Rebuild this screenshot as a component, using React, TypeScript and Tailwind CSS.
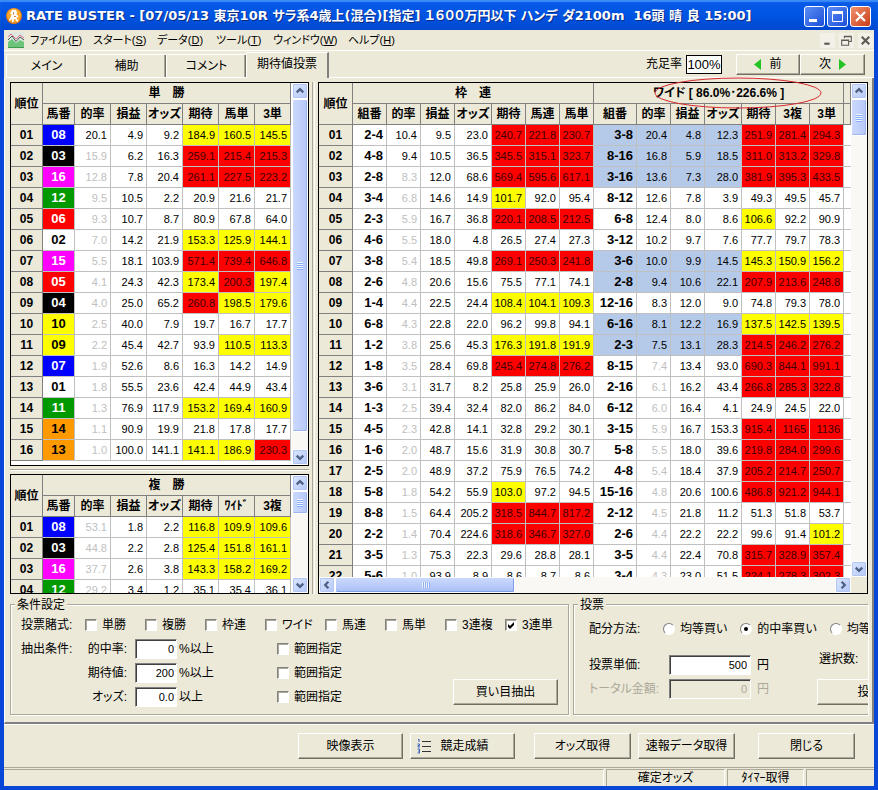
import { ReactNode, useState } from "react";
import clsx from "clsx";

interface Group {
  title: string;
  columns: string[];
  widths: number[];
  // rates below this value are printed in grey
  minRate: number;
  highlight?: boolean;
  rows: string[];
}

const WIN: Group = {
  title: "単　勝",
  columns: ["馬番", "的率", "損益", "オッズ", "期待", "馬単", "3単"],
  widths: [32, 36, 36, 36, 36, 36, 36],
  minRate: 20,
  rows: [
    "08 20.1 4.9 9.2 184.9 160.5 145.5",
    "03 15.9 6.2 16.3 259.1 215.4 215.3",
    "16 12.8 7.8 20.4 261.1 227.5 223.2",
    "12 9.5 10.5 2.2 20.9 21.6 21.7",
    "06 9.3 10.7 8.7 80.9 67.8 64.0",
    "02 7.0 14.2 21.9 153.3 125.9 144.1",
    "15 5.5 18.1 103.9 571.4 739.4 646.8",
    "05 4.1 24.3 42.3 173.4 200.3 197.4",
    "04 4.0 25.0 65.2 260.8 198.5 179.6",
    "10 2.5 40.0 7.9 19.7 16.7 17.7",
    "09 2.2 45.4 42.7 93.9 110.5 113.3",
    "07 1.9 52.6 8.6 16.3 14.2 14.9",
    "01 1.8 55.5 23.6 42.4 44.9 43.4",
    "11 1.3 76.9 117.9 153.2 169.4 160.9",
    "14 1.1 90.9 19.9 21.8 17.8 17.7",
    "13 1.0 100.0 141.1 141.1 186.9 230.3",
  ],
};

const PLACE: Group = {
  title: "複　勝",
  columns: ["馬番", "的率", "損益", "オッズ", "期待", "ﾜｲﾄﾞ", "3複"],
  widths: [32, 36, 36, 36, 36, 36, 36],
  minRate: 60,
  rows: [
    "08 53.1 1.8 2.2 116.8 109.9 109.6",
    "03 44.8 2.2 2.8 125.4 151.8 161.1",
    "16 37.7 2.6 3.8 143.3 158.2 169.2",
    "12 29.2 3.4 1.2 35.1 35.4 36.1",
  ],
};

const BRACKET: Group = {
  title: "枠　連",
  columns: ["組番", "的率", "損益", "オッズ", "期待", "馬連", "馬単"],
  widths: [34, 34, 34, 37, 34, 34, 34],
  minRate: 9,
  rows: [
    "2-4 10.4 9.5 23.0 240.7 221.8 230.7",
    "4-8 9.4 10.5 36.5 345.5 315.1 323.7",
    "2-8 8.3 12.0 68.6 569.4 595.6 617.1",
    "3-4 6.8 14.6 14.9 101.7 92.0 95.4",
    "2-3 5.9 16.7 36.8 220.1 208.5 212.5",
    "4-6 5.5 18.0 4.8 26.5 27.4 27.3",
    "3-8 5.4 18.5 49.8 269.1 250.3 241.8",
    "2-6 4.8 20.6 15.6 75.5 77.1 74.1",
    "1-4 4.4 22.5 24.4 108.4 104.1 109.3",
    "6-8 4.3 22.8 22.0 96.2 99.8 94.1",
    "1-2 3.8 25.6 45.3 176.3 191.8 191.9",
    "1-8 3.5 28.4 69.8 245.4 274.8 276.2",
    "3-6 3.1 31.7 8.2 25.8 25.9 26.0",
    "1-3 2.5 39.4 32.4 82.0 86.2 84.0",
    "4-5 2.3 42.8 14.1 32.8 29.2 30.1",
    "1-6 2.0 48.7 15.6 31.9 30.8 30.7",
    "2-5 2.0 48.9 37.2 75.9 76.5 74.2",
    "5-8 1.8 54.2 55.9 103.0 97.2 94.5",
    "8-8 1.5 64.4 205.2 318.5 844.7 817.2",
    "2-2 1.4 70.4 224.6 318.6 346.7 327.0",
    "3-5 1.3 75.3 22.3 29.6 28.8 28.1",
    "5-6 1.0 93.9 8.9 8.6 8.7 8.6",
  ],
};

const WIDE: Group = {
  title: "ワイド [ 86.0%･226.6% ]",
  columns: ["組番", "的率", "損益", "オッズ", "期待", "3複", "3単"],
  widths: [43, 34, 34, 37, 34, 34, 34],
  minRate: 7.5,
  highlight: true,
  rows: [
    "3-8 20.4 4.8 12.3 251.9 281.4 294.3",
    "8-16 16.8 5.9 18.5 311.0 313.2 329.8",
    "3-16 13.6 7.3 28.0 381.9 395.3 433.5",
    "8-12 12.6 7.8 3.9 49.3 49.5 45.7",
    "6-8 12.4 8.0 8.6 106.6 92.2 90.9",
    "3-12 10.2 9.7 7.6 77.7 79.7 78.3",
    "3-6 10.0 9.9 14.5 145.3 150.9 156.2",
    "2-8 9.4 10.6 22.1 207.9 213.6 248.8",
    "12-16 8.3 12.0 9.0 74.8 79.3 78.0",
    "6-16 8.1 12.2 16.9 137.5 142.5 139.5",
    "2-3 7.5 13.1 28.3 214.5 246.2 276.2",
    "8-15 7.4 13.4 93.0 690.3 844.1 991.1",
    "2-16 6.1 16.2 43.4 266.8 285.3 322.8",
    "6-12 6.0 16.4 4.1 24.9 24.5 22.0",
    "3-15 5.9 16.7 153.3 915.4 1165 1136",
    "5-8 5.5 18.0 39.6 219.8 284.0 299.6",
    "4-8 5.4 18.4 37.9 205.2 214.7 250.7",
    "15-16 4.8 20.6 100.6 486.8 921.2 944.1",
    "2-12 4.5 21.8 11.2 51.3 51.8 53.7",
    "2-6 4.4 22.2 22.2 99.6 91.4 101.2",
    "3-5 4.4 22.4 70.8 315.7 328.9 357.4",
    "3-4 4.3 23.0 51.5 224.1 278.3 302.3",
  ],
};

// bracket colours, two horses per bracket
const HORSE_COLORS: string[] = [
  "bg-white text-black",
  "bg-black text-white",
  "bg-[#ff0000] text-white",
  "bg-[#0000ff] text-white",
  "bg-[#ffff00] text-black",
  "bg-[#009900] text-white",
  "bg-[#ff9900] text-black",
  "bg-[#ff00ff] text-white",
];

const raised =
  "border border-t-white border-l-white border-r-[#716f64] border-b-[#716f64] shadow-[inset_-1px_-1px_0_#aca899]";
const sunken =
  "border border-t-[#808080] border-l-[#808080] border-r-white border-b-white shadow-[inset_1px_1px_0_#404040]";
const headCell = "border-r border-b border-[#808080] bg-[#ece9d8] p-0 text-center font-bold";

const valueColor = (value: number) => {
  if (value >= 200) return "bg-[#ff0000] text-[#400000]";
  if (value >= 100) return "bg-[#ffff00] text-black";
  return "bg-white text-black";
};

const GroupCells = ({ group, row }: { group: Group; row: string }) => {
  const cells = row.split(" ");
  const isHorse = group.columns[0] === "馬番";
  const marked =
    group.highlight &&
    Number(cells[1]) >= group.minRate &&
    cells.slice(4).every((value) => Number(value) >= 100);
  const base = marked ? "bg-[#b5c9e8] text-black" : "bg-white text-black";

  return (
    <>
      {cells.map((cell, index) => {
        if (index === 0) {
          return (
            <td
              key={index}
              className={clsx(
                "border-r border-b border-[#c0c0c0] py-0 text-[13px] font-bold",
                isHorse ? "px-0 text-center" : "pr-[3px] pl-0 text-right",
                isHorse ? HORSE_COLORS[Math.floor((Number(cell) - 1) / 2)] : base
              )}
            >
              {cell}
            </td>
          );
        }
        return (
          <td
            key={index}
            className={clsx(
              "border-r border-b border-[#c0c0c0] py-0 pr-[3px] pl-0 text-right",
              index > 3 && valueColor(Number(cell)),
              index < 4 && (marked ? "bg-[#b5c9e8]" : "bg-white"),
              index === 1 && Number(cell) < group.minRate && "text-[#c0c0c0]"
            )}
          >
            {cell}
          </td>
        );
      })}
    </>
  );
};

const OddsTable = ({ groups, rankWidth, tail }: { groups: Group[]; rankWidth: number; tail?: boolean }) => {
  const widths = groups.flatMap((group) => group.widths);
  const total = widths.reduce((acc, width) => acc + width, rankWidth);

  return (
    <table
      className="table-fixed border-separate border-spacing-0 text-[11px] leading-5"
      style={{ width: tail ? "100%" : total }}
    >
      <colgroup>
        <col style={{ width: rankWidth }} />
        {widths.map((width, index) => (
          <col key={index} style={{ width }} />
        ))}
        {tail && <col />}
      </colgroup>
      <thead className="text-xs leading-5">
        <tr>
          <th rowSpan={2} className={headCell}>
            順位
          </th>
          {groups.map((group) => (
            <th key={group.title} colSpan={7} className={headCell}>
              {group.title}
            </th>
          ))}
          {tail && <th className={headCell} />}
        </tr>
        <tr>
          {groups.map((group) =>
            group.columns.map((column) => (
              <th key={group.title + column} className={headCell}>
                {column}
              </th>
            ))
          )}
          {tail && <th className={headCell} />}
        </tr>
      </thead>
      <tbody>
        {groups[0].rows.map((row, index) => (
          <tr key={row}>
            <th className={clsx(headCell, "text-xs leading-5")}>
              {String(index + 1).padStart(2, "0")}
            </th>
            {groups.map((group) => (
              <GroupCells key={group.title} group={group} row={group.rows[index]} />
            ))}
            {tail && <td className="border-b border-[#c0c0c0] bg-white p-0" />}
          </tr>
        ))}
      </tbody>
    </table>
  );
};

const ARROWS = {
  up: "M4 9 L7.5 5.5 L11 9",
  down: "M4 6 L7.5 9.5 L11 6",
  left: "M9 4 L5.5 7.5 L9 11",
  right: "M6 4 L9.5 7.5 L6 11",
};

const ScrollArrow = ({ dir }: { dir: keyof typeof ARROWS }) => (
  <button
    type="button"
    aria-label={dir}
    className="size-4 shrink-0 rounded-xs border border-white bg-linear-to-br from-[#dce6ff] to-[#b4c8f6] shadow-[inset_0_0_0_1px_#b3c6f3]"
  >
    <svg viewBox="0 0 15 15" className="size-full">
      <path d={ARROWS[dir]} fill="none" stroke="#4d6185" strokeWidth="2.4" />
    </svg>
  </button>
);

const VScroll = ({ thumb }: { thumb: string }) => (
  <div className="flex w-4 shrink-0 flex-col bg-[#f9f8f4]">
    <ScrollArrow dir="up" />
    <div className="min-h-0 flex-1">
      <div
        className="flex flex-col items-center justify-center gap-px rounded-xs border border-white bg-linear-to-r from-[#cbd9fd] to-[#b6c8f8] shadow-[inset_-1px_-1px_0_#9db5ec]"
        style={{ height: thumb }}
      >
        {[0, 1, 2, 3].map((line) => (
          <span key={line} className="h-px w-1.5 bg-[#eef4fe] shadow-[0_1px_0_#8cb0f8]" />
        ))}
      </div>
    </div>
    <ScrollArrow dir="down" />
  </div>
);

const HScroll = () => (
  <div className="flex h-4 min-w-0 flex-1 bg-[#f9f8f4]">
    <ScrollArrow dir="left" />
    <div className="min-w-0 flex-1">
      <div className="flex h-full w-[36%] items-center justify-center gap-px rounded-xs border border-white bg-linear-to-b from-[#cbd9fd] to-[#a9bff5] shadow-[inset_-1px_-1px_0_#7f9fe8]">
        {[0, 1, 2, 3].map((line) => (
          <span key={line} className="h-1.5 w-px bg-[#eef4fe] shadow-[1px_0_0_#8cb0f8]" />
        ))}
      </div>
    </div>
    <ScrollArrow dir="right" />
  </div>
);

const Check = ({ label, defaultChecked }: { label: string; defaultChecked?: boolean }) => (
  <label className="flex w-15 shrink-0 items-center gap-[5px] whitespace-nowrap">
    <span className="relative size-3 shrink-0">
      <input
        type="checkbox"
        defaultChecked={defaultChecked}
        className="peer block size-3 appearance-none border border-t-[#808080] border-r-white border-b-white border-l-[#808080] bg-white shadow-[inset_1px_1px_0_#aca899]"
      />
      <svg
        viewBox="0 0 12 12"
        className="pointer-events-none absolute inset-0 hidden peer-checked:block"
      >
        <path d="M3 5 L5 7 L9 3 V6 L5 10 L3 8 Z" fill="#000" />
      </svg>
    </span>
    {label}
  </label>
);

const Radio = ({ label, defaultChecked }: { label: string; defaultChecked?: boolean }) => (
  <label className="flex shrink-0 items-center gap-[5px] whitespace-nowrap">
    <span className="relative size-3 shrink-0">
      <input
        type="radio"
        name="allocation"
        defaultChecked={defaultChecked}
        className="peer block size-3 appearance-none rounded-full border border-t-[#808080] border-r-white border-b-white border-l-[#808080] bg-white"
      />
      <span className="pointer-events-none absolute inset-1 hidden rounded-full bg-black peer-checked:block" />
    </span>
    {label}
  </label>
);

const PushButton = ({ children, className }: { children: ReactNode; className?: string }) => (
  <button
    type="button"
    className={clsx(
      "flex shrink-0 items-center justify-center bg-[#ece9d8] whitespace-nowrap",
      raised,
      className
    )}
  >
    {children}
  </button>
);

const Condition = ({ id, label, value, unit }: { id: string; label: string; value: string; unit: string }) => (
  <div className="flex h-6 items-center">
    <label htmlFor={id} className="w-[42px] text-right whitespace-nowrap">
      {label}
    </label>
    <input
      id={id}
      defaultValue={value}
      className={clsx("ml-2 h-5 w-[42px] bg-white px-[2px] text-right text-[11px]", sunken)}
    />
    <span className="ml-0.5 w-[98px]">{unit}</span>
    <Check label="範囲指定" />
  </div>
);

const AppIcon = () => (
  <svg viewBox="0 0 16 16" className="size-4 shrink-0">
    <circle cx="8" cy="8" r="8" fill="#e8780c" />
    <circle cx="8" cy="7.500" r="7" fill="#fba930" />
    <path
      d="M6.500 1.500 L8 2 L9.500 1.500 L11 4 L10.500 6.500 L12.500 8 L12 9.500 L10.500 9 L11 11 L12.500 13 L11 14 L9.500 11.500 L8 11 L7.500 14 L6 14.500 L6 11 L4 13 L3 12 L5 8.500 L5.500 6 L4 5.500 L5 3.500 Z"
      fill="#fff"
    />
    <path d="M7.500 4 V6.500 M8 8.500 H10" stroke="#c06a18" strokeWidth=".8" />
  </svg>
);

const ChartIcon = () => (
  <svg viewBox="0 0 16 16" className="size-4 shrink-0">
    <rect width="16" height="16" fill="#dfe8e0" />
    <path d="M0 10 L4 7 L8 11 L12 8 L16 10 V16 H0 Z" fill="#6cc47a" />
    <path d="M0 8 L4 4 L8 9.500 L12 5 L16 8" fill="none" stroke="#4c5a52" strokeWidth="1" />
    <path d="M0 5 L3 2 L8 7 L12 3 L16 6" fill="none" stroke="#e0708a" strokeWidth="1" />
    <path d="M0 15.500 H16" stroke="#3f9a50" />
  </svg>
);

const ListIcon = () => (
  <svg viewBox="0 0 16 16" className="size-4 shrink-0">
    <path
      d="M2 2 L3 1 V4 M1.500 6 H3.500 V7.500 H2 V9 H4 M1.500 11 H3.500 V15 H1.500 M2 13 H3.500"
      fill="none"
      stroke="#3a62b8"
      strokeWidth="1"
    />
    <path d="M6 3.500 H15 M6 8.500 H15 M6 13.500 H15" stroke="#333" strokeWidth="1" />
  </svg>
);

const captionButton =
  "flex size-[21px] items-center justify-center rounded-[3px] border border-white bg-linear-to-br";

const TitleBar = () => (
  <header className="flex h-[30px] shrink-0 items-center bg-linear-to-b from-[#0a5be8] via-[#0054e3] to-[#0048d0] pt-0.5 pr-[7px] pl-1.5 shadow-[inset_0_2px_1px_#3c8cf8]">
    <AppIcon />
    <h1 className="ml-1 min-w-0 flex-1 overflow-hidden text-[13px] leading-5 font-bold whitespace-pre text-white [font-family:'DejaVu_Sans','Noto_Sans_CJK_JP',sans-serif] [text-shadow:1px_1px_0_#0a2a80]">
      RATE BUSTER - [07/05/13 東京10R サラ系4歳上(混合)[指定] １６００万円以下 ハンデ ダ2100m  16頭 晴 良 15:00]
    </h1>
    <div className="flex gap-0.5">
      <button type="button" aria-label="最小化" className={clsx(captionButton, "from-[#5b8cf5] to-[#1c4fd8]")}>
        <svg viewBox="0 0 19 19" className="size-full">
          <rect x="4" y="12" width="8" height="3" fill="#fff" />
        </svg>
      </button>
      <button type="button" aria-label="最大化" className={clsx(captionButton, "from-[#5b8cf5] to-[#1c4fd8]")}>
        <svg viewBox="0 0 19 19" className="size-full">
          <path d="M4.500 5 H14.500 V14.500 H4.500 Z" fill="none" stroke="#fff" />
          <rect x="4" y="4" width="11" height="3" fill="#fff" />
        </svg>
      </button>
      <button type="button" aria-label="閉じる" className={clsx(captionButton, "from-[#f0906c] to-[#c93a12]")}>
        <svg viewBox="0 0 19 19" className="size-full">
          <path d="M5 5 L14 14 M14 5 L5 14" stroke="#fff" strokeWidth="2.2" />
        </svg>
      </button>
    </div>
  </header>
);

const MENUS = [
  { label: "ファイル", accel: "F", width: "w-[63px]" },
  { label: "スタート", accel: "S", width: "w-16" },
  { label: "データ", accel: "D", width: "w-[59px]" },
  { label: "ツール", accel: "T", width: "w-[57px]" },
  { label: "ウィンドウ", accel: "W", width: "w-[75px]" },
  { label: "ヘルプ", accel: "H", width: "w-[59px]" },
];

const MDI_ICONS = [
  { name: "子ウィンドウを最小化", path: "M4 10 H9", weight: 2 },
  { name: "子ウィンドウを元に戻す", path: "M5 5 V3 H11.500 V8 H9.500 M5 3.500 H11 M2.500 6.500 H9 V11.500 H2.500 Z M2.500 7 H9", weight: 1 },
  { name: "子ウィンドウを閉じる", path: "M3.500 3.500 L10.500 10.500 M10.500 3.500 L3.500 10.500", weight: 2 },
];

const MenuBar = () => (
  <nav className="flex h-[21px] shrink-0 items-center border-b border-white pr-px pl-1">
    <ChartIcon />
    <div className="ml-1.5 flex flex-1 text-[11px] leading-4">
      {MENUS.map((menu) => (
        <button
          key={menu.accel}
          type="button"
          className={clsx("shrink-0 text-left whitespace-nowrap", menu.width)}
        >
          {menu.label}(<u>{menu.accel}</u>)
        </button>
      ))}
    </div>
    <div className="flex gap-1">
      {MDI_ICONS.map((icon) => (
        <button key={icon.name} type="button" aria-label={icon.name} className="size-[15px] bg-[#f3f1e7]">
          <svg viewBox="0 0 14 14" className="size-full">
            <path d={icon.path} fill="none" stroke="#5c5a52" strokeWidth={icon.weight} />
          </svg>
        </button>
      ))}
    </div>
  </nav>
);

const TABS = ["メイン", "補助", "コメント", "期待値投票"];

const TabBar = () => {
  const [active, setActive] = useState(3);

  return (
    <div className="flex h-[27px] shrink-0">
      <div role="tablist" className="flex items-end pl-0.5">
        {TABS.map((tab, index) => (
          <button
            key={tab}
            type="button"
            role="tab"
            aria-selected={active === index}
            onClick={() => setActive(index)}
            className={clsx(
              "border-t border-l border-white",
              active === index
                ? "h-[26px] w-[83px] border-r-2 border-r-[#808080] pb-1"
                : "h-6 w-20 border-b shadow-[inset_-1px_0_0_#716f64,inset_-2px_0_0_#aca899]"
            )}
          >
            {tab}
          </button>
        ))}
      </div>
      <div className="flex flex-1 items-center justify-end border-b border-white pr-[9px]">
        <label htmlFor="fill" className="mr-1">
          充足率
        </label>
        <input
          id="fill"
          readOnly
          value="100%"
          className="mr-3.5 h-[19px] w-9 border border-black bg-white text-center text-[13px]"
        />
        <PushButton className="h-[21px] w-16 gap-2">
          <svg viewBox="0 0 7 11" className="h-[11px] w-[7px]">
            <path d="M7 0 V11 L0 5.500 Z" fill="#22c322" />
          </svg>
          前
        </PushButton>
        <PushButton className="h-[21px] w-[65px] gap-2">
          次
          <svg viewBox="0 0 7 11" className="h-[11px] w-[7px]">
            <path d="M0 0 V11 L7 5.500 Z" fill="#22c322" />
          </svg>
        </PushButton>
      </div>
    </div>
  );
};

const BETS = ["単勝", "複勝", "枠連", "ワイド", "馬連", "馬単", "3連複", "3連単"];

const fieldset =
  "min-w-0 border border-[#aca899] shadow-[1px_1px_0_#fff,inset_1px_1px_0_#fff]";

const ConditionBox = () => (
  <fieldset className={clsx("relative w-[559px] shrink-0 pt-2 pr-2.5 pb-1 pl-2.5", fieldset)}>
    <legend className="absolute -top-2 left-1 bg-[#ece9d8] px-0.5 leading-4">条件設定</legend>
    <div className="flex h-6 items-center">
      <span className="w-16 shrink-0">投票賭式:</span>
      {BETS.map((bet) => (
        <Check key={bet} label={bet} defaultChecked={bet === "3連単"} />
      ))}
    </div>
    <div className="flex">
      <span className="w-16 shrink-0 leading-6">抽出条件:</span>
      <div>
        <Condition id="rate" label="的中率:" value="0" unit="%以上" />
        <Condition id="expect" label="期待値:" value="200" unit="%以上" />
        <Condition id="odds" label="オッズ:" value="0.0" unit="以上" />
      </div>
      <PushButton className="mb-1 ml-auto h-[26px] w-[105px] self-end">買い目抽出</PushButton>
    </div>
  </fieldset>
);

const VoteBox = () => (
  <div className="min-w-0 flex-1">
    <fieldset className={clsx("relative h-full border-r-0 pl-[15px]", fieldset)}>
      <legend className="absolute -top-2 left-1 bg-[#ece9d8] px-0.5 leading-4">投票</legend>
      <div className="h-full overflow-hidden pt-3">
        <div className="flex h-6 items-center">
          <span className="w-[74px] shrink-0">配分方法:</span>
          <div className="flex gap-[13px]">
            <Radio label="均等買い" />
            <Radio label="的中率買い" defaultChecked />
            <Radio label="均等払い" />
          </div>
        </div>
        <div className="mt-3.5 flex">
          <div className="flex w-[228px] shrink-0 flex-col gap-1">
            <div className="flex h-5 items-center">
              <label htmlFor="unit" className="w-20">
                投票単価:
              </label>
              <input
                id="unit"
                defaultValue="500"
                className={clsx("h-5 w-[82px] bg-white px-[3px] text-right text-[11px]", sunken)}
              />
              <span className="ml-1.5">円</span>
            </div>
            <div className="flex h-5 items-center text-[#aca899]">
              <label htmlFor="total" className="w-20 whitespace-nowrap">
                トータル金額:
              </label>
              <input
                id="total"
                disabled
                defaultValue="0"
                className={clsx("h-5 w-[82px] bg-[#ece9d8] px-[3px] text-right text-[11px]", sunken)}
              />
              <span className="ml-1.5">円</span>
            </div>
          </div>
          <div className="flex shrink-0 flex-col gap-4">
            <span className="pl-0.5 leading-2">選択数:</span>
            <PushButton className="h-[26px] w-[105px]">投票</PushButton>
          </div>
        </div>
      </div>
    </fieldset>
  </div>
);

const App = () => {
  return (
    <div className="flex h-screen min-h-[600px] flex-col overflow-hidden bg-[#0846d8] text-xs text-black [font-family:'Liberation_Sans','Noto_Sans_CJK_JP',sans-serif] [font-feature-settings:'palt']">
      <TitleBar />
      <div className="mx-1 mb-1 flex min-h-0 flex-1 flex-col bg-[#ece9d8]">
        <MenuBar />
        <TabBar />

        <main className="flex min-h-0 flex-1 flex-col border-r-2 border-b-2 border-l border-[#808080] border-l-white pt-1 pr-1 pb-[7px] pl-[5px]">
          <div className="flex min-h-0 flex-1">
            <div className="flex w-[299px] shrink-0 flex-col">
              <section className="flex h-96 shrink-0 border border-black bg-white">
                <div className="min-w-0 flex-1 overflow-hidden">
                  <OddsTable groups={[WIN]} rankWidth={32} />
                </div>
                <VScroll thumb="95%" />
              </section>
              <div className="my-[3px] h-0.5 border-t border-b border-t-[#aca899] border-b-white" />
              <section className="flex min-h-0 flex-1 border border-black bg-white">
                <div className="min-w-0 flex-1 overflow-hidden">
                  <OddsTable groups={[PLACE]} rankWidth={32} />
                </div>
                <VScroll thumb="27%" />
              </section>
            </div>

            <div className="mx-[3px] w-[3px] shrink-0 border-r border-l border-r-white border-l-[#aca899]" />

            <section className="relative flex min-w-0 flex-1 flex-col border border-black bg-white">
              <div className="flex min-h-0 flex-1">
                <div className="min-w-0 flex-1 overflow-hidden">
                  <OddsTable groups={[BRACKET, WIDE]} rankWidth={34} tail />
                </div>
                <VScroll thumb="8%" />
              </div>
              <div className="flex">
                <HScroll />
                <div className="size-4 shrink-0 bg-[#ece9d8]" />
              </div>
              <svg
                viewBox="0 0 168 32"
                className="pointer-events-none absolute -top-1.5 left-[335px] h-8 w-[168px]"
              >
                <ellipse cx="84" cy="16" rx="83" ry="15" fill="none" stroke="#d8282c" />
              </svg>
            </section>
          </div>

          <div className="mt-2.5 flex h-[111px] shrink-0 gap-1">
            <ConditionBox />
            <VoteBox />
          </div>
        </main>

        <footer className="shrink-0 border-t border-white">
          <div className="flex justify-end gap-[7px] pt-2 pr-[19px] pb-2">
            <PushButton className="h-[26px] w-[105px]">映像表示</PushButton>
            <PushButton className="h-[26px] w-[105px] gap-2 pr-5">
              <ListIcon />
              競走成績
            </PushButton>
            <PushButton className="ml-3 h-[26px] w-[97px]">オッズ取得</PushButton>
            <PushButton className="h-[26px] w-[97px]">速報データ取得</PushButton>
            <PushButton className="ml-4 h-[26px] w-[97px]">閉じる</PushButton>
          </div>
          <div className="flex h-[19px] gap-0.5 border-t border-[#aca899] pt-px text-center leading-4">
            <div className="flex-1 border-t border-r border-[#aca899] border-r-white" />
            <div className="w-[119px] border-t border-r border-l border-[#aca899] border-r-white">確定オッズ</div>
            <div className="w-[77px] border-t border-r border-l border-[#aca899] border-r-white">ﾀｲﾏｰ取得</div>
            <div className="w-[68px] border-t border-l border-[#aca899]" />
          </div>
        </footer>
      </div>
    </div>
  );
};

export default App;
